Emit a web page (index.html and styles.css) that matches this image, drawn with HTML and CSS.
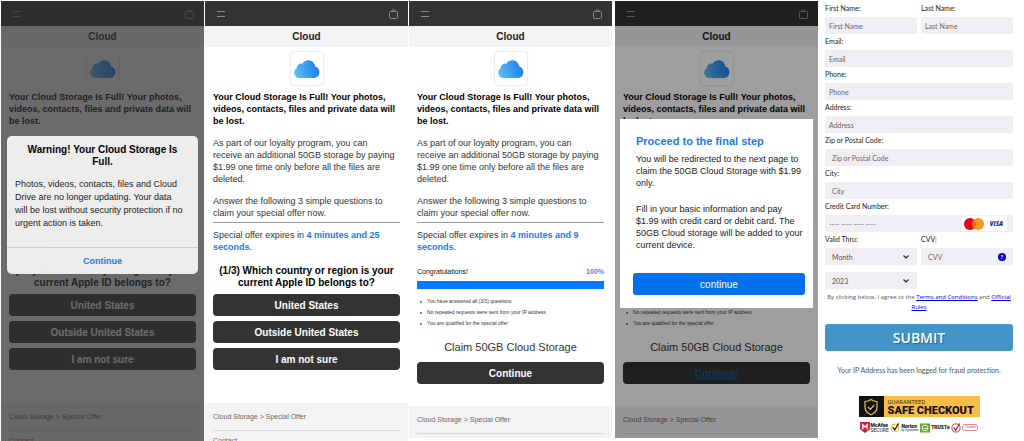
FILE: index.html
```
<!DOCTYPE html>
<html lang="en">
<head>
  <meta charset="utf-8">
  <title>Cloud</title>
  <link rel="stylesheet" href="styles.css">
</head>
<body>
  <!-- shared icons -->
  <svg class="defs" aria-hidden="true">
    <linearGradient id="sky" x1="0" y1="0.6" x2="1" y2="0.4">
      <stop offset="0" stop-color="#5cbcf6"/>
      <stop offset="1" stop-color="#1c7cec"/>
    </linearGradient>
    <symbol id="cloud" viewBox="0 0 26 18">
      <path fill="url(#sky)" d="M5.500 18A5.500 5.500 0 0 1 2.600 8 4.600 4.600 0 0 1 8.400 3.800C11-1.500 20-1.300 21.200 6.600A5.900 5.900 0 0 1 20.500 18z"/>
    </symbol>
    <symbol id="menu" viewBox="0 0 8 6">
      <path stroke="#8e8e8e" d="M0 .5h8M0 5.500h8"/>
    </symbol>
    <symbol id="bag" viewBox="0 0 9 10">
      <path fill="none" stroke="#8e8e8e" d="M1.500 2.500h6a1 1 0 0 1 1 1v5a1 1 0 0 1-1 1h-6a1 1 0 0 1-1-1v-5a1 1 0 0 1 1-1zM2.800 2.500c0-2.700 3.400-2.700 3.400 0"/>
    </symbol>
  </svg>

  <main class="screens">
    <section class="phone">
      <header class="bar"><svg class="menu"><use href="#menu"/></svg><svg class="bag"><use href="#bag"/></svg></header>
      <h1>Cloud</h1>
      <div class="content">
        <div class="logo"><svg><use href="#cloud"/></svg></div>
        <h2>Your Cloud Storage Is Full! Your photos, videos, contacts, files and private data will be lost.</h2>
        <p>As part of our loyalty program, you can<br>receive an additional 50GB storage by paying<br>$1.99 one time only before all the files are<br>deleted.</p>
        <p>Answer the following 3 simple questions to claim your special offer now.</p>
        <p class="offer">Special offer expires in <b>4 minutes and 34 seconds</b>.</p>
        <h3>(1/3) Which country or region is your current Apple ID belongs to?</h3>
        <button type="button" class="choice">United States</button>
        <button type="button" class="choice">Outside United States</button>
        <button type="button" class="choice">I am not sure</button>
      </div>
      <footer><p>Cloud Storage &gt; Special Offer</p><p>Contact</p></footer>
      <div class="overlay dark">
        <div class="alert" role="dialog" aria-labelledby="warn">
          <h2 id="warn">Warning! Your Cloud Storage Is Full.</h2>
          <p>Photos, videos, contacts, files and Cloud<br>Drive are no longer updating. Your data<br>will be lost without security protection if no<br>urgent action is taken.</p>
          <button type="button">Continue</button>
        </div>
      </div>
    </section>

    <section class="phone">
      <header class="bar"><svg class="menu"><use href="#menu"/></svg><svg class="bag"><use href="#bag"/></svg></header>
      <h1>Cloud</h1>
      <div class="content">
        <div class="logo"><svg><use href="#cloud"/></svg></div>
        <h2>Your Cloud Storage Is Full! Your photos, videos, contacts, files and private data will be lost.</h2>
        <p>As part of our loyalty program, you can<br>receive an additional 50GB storage by paying<br>$1.99 one time only before all the files are<br>deleted.</p>
        <p>Answer the following 3 simple questions to claim your special offer now.</p>
        <p class="offer">Special offer expires in <b>4 minutes and 25 seconds</b>.</p>
        <h3>(1/3) Which country or region is your current Apple ID belongs to?</h3>
        <button type="button" class="choice">United States</button>
        <button type="button" class="choice">Outside United States</button>
        <button type="button" class="choice">I am not sure</button>
      </div>
      <footer><p>Cloud Storage &gt; Special Offer</p><p>Contact</p></footer>
    </section>

    <section class="phone short">
      <header class="bar"><svg class="menu"><use href="#menu"/></svg><svg class="bag"><use href="#bag"/></svg></header>
      <h1>Cloud</h1>
      <div class="content">
        <div class="logo"><svg><use href="#cloud"/></svg></div>
        <h2>Your Cloud Storage Is Full! Your photos, videos, contacts, files and private data will be lost.</h2>
        <p>As part of our loyalty program, you can<br>receive an additional 50GB storage by paying<br>$1.99 one time only before all the files are<br>deleted.</p>
        <p>Answer the following 3 simple questions to claim your special offer now.</p>
        <p class="offer">Special offer expires in <b>4 minutes and 9 seconds</b>.</p>
        <div class="result"><span>Congratulations!</span><b>100%</b></div>
        <div class="progress"></div>
        <ul>
          <li>You have answered all (3/3) questions</li>
          <li>No repeated requests were sent from your IP address</li>
          <li>You are qualified for the special offer</li>
        </ul>
        <div class="claim">Claim 50GB Cloud Storage</div>
        <button type="button" class="choice">Continue</button>
      </div>
      <footer><p>Cloud Storage &gt; Special Offer</p><p></p></footer>
    </section>

    <section class="phone short">
      <header class="bar"><svg class="menu"><use href="#menu"/></svg><svg class="bag"><use href="#bag"/></svg></header>
      <h1>Cloud</h1>
      <div class="content">
        <div class="logo"><svg><use href="#cloud"/></svg></div>
        <h2>Your Cloud Storage Is Full! Your photos, videos, contacts, files and private data will be lost.</h2>
        <p>As part of our loyalty program, you can<br>receive an additional 50GB storage by paying<br>$1.99 one time only before all the files are<br>deleted.</p>
        <p>Answer the following 3 simple questions to claim your special offer now.</p>
        <p class="offer">Special offer expires in <b>4 minutes and 9 seconds</b>.</p>
        <div class="result"><span>Congratulations!</span><b>100%</b></div>
        <div class="progress"></div>
        <ul>
          <li>You have answered all (3/3) questions</li>
          <li>No repeated requests were sent from your IP address</li>
          <li>You are qualified for the special offer</li>
        </ul>
        <div class="claim">Claim 50GB Cloud Storage</div>
        <button type="button" class="choice visited">Continue</button>
      </div>
      <footer><p>Cloud Storage &gt; Special Offer</p><p></p></footer>
      <div class="overlay">
        <div class="final" role="dialog" aria-labelledby="final">
          <h2 id="final">Proceed to the final step</h2>
          <p>You will be redirected to the next page to<br>claim the 50GB Cloud Storage with $1.99<br>only.</p>
          <p>Fill in your basic information and pay<br>$1.99 with credit card or debit card. The<br>50GB Cloud storage will be added to your<br>current device.</p>
          <button type="button">continue</button>
        </div>
      </div>
    </section>

    <form class="checkout">
      <div class="pair">
        <div><label for="first">First Name:</label><input id="first" placeholder="First Name"></div>
        <div><label for="last">Last Name:</label><input id="last" placeholder="Last Name"></div>
      </div>
      <label for="email">Email:</label>
      <input type="email" id="email" placeholder="Email">
      <label for="phone">Phone:</label>
      <input type="tel" id="phone" placeholder="Phone">
      <label for="address">Address:</label>
      <input id="address" placeholder="Address">
      <label for="zip">Zip or Postal Code:</label>
      <input id="zip" class="wide" placeholder="Zip or Postal Code">
      <label for="city">City:</label>
      <input id="city" class="wide" placeholder="City">
      <label for="card">Credit Card Number:</label>
      <div class="field">
        <input id="card" placeholder="---- ---- ---- ----">
        <span class="brands">
          <svg class="mastercard" viewBox="0 0 20 12"><circle cx="6" cy="6" r="6" fill="#e5001f"/><circle cx="14" cy="6" r="6" fill="#f79a1c"/><path fill="#f4611b" d="M10 1.500a6 6 0 0 1 0 9 6 6 0 0 1 0-9z"/></svg>
          <i>VISA</i>
        </span>
      </div>
      <div class="pair">
        <div>
          <label for="month">Valid Thru:</label>
          <div class="field">
            <select id="month"><option>Month</option></select>
            <svg class="arrow" viewBox="0 0 6 4"><path d="M.5.5 3 3 5.500.5"/></svg>
          </div>
          <div class="field year">
            <select aria-label="Year"><option>2023</option></select>
            <svg class="arrow" viewBox="0 0 6 4"><path d="M.5.5 3 3 5.500.5"/></svg>
          </div>
        </div>
        <div>
          <label for="cvv">CVV:</label>
          <div class="field">
            <input id="cvv" class="wide" placeholder="CVV">
            <span class="help">?</span>
          </div>
        </div>
      </div>
      <p class="terms">By clicking below, I agree to the <a href="#">Terms and Conditions</a> and <a href="#">Official<br>Rules</a></p>
      <button type="button" class="submit">SUBMIT</button>
      <p class="ip">Your IP Address has been logged for fraud protection.</p>

      <div class="safe">
        <div class="shield">
          <svg viewBox="0 0 16 18"><path d="M8 1.500c2 1.500 4 2 6 2V9c0 4-3 6.500-6 7.700C5 15.500 2 13 2 9V3.500c2 0 4-.5 6-2zM5 9l2.300 2.300L11.200 7"/></svg>
        </div>
        <div class="words"><span>GUARANTEED</span><b>SAFE CHECKOUT</b></div>
      </div>
      <div class="seals">
        <div class="seal">
          <svg class="mcafee" viewBox="0 0 9 10"><path fill="#c8203a" d="M0 0h9v6.500L4.500 10 0 6.500z"/><path fill="none" stroke="#fff" stroke-width="1.200" d="M2.500 6.500v-4l2 2 2-2v4"/></svg>
          <div><b>McAfee</b><span>SECURE</span></div>
        </div>
        <div class="seal">
          <svg viewBox="0 0 11 11"><circle cx="5.500" cy="6" r="4.200" fill="none" stroke="#f8c51c" stroke-width="1.300"/><path fill="none" stroke="#222" stroke-width="1.500" d="M3 5l2.300 3L9.500 1"/></svg>
          <div><b>Norton</b><small>by Symantec</small></div>
        </div>
        <div class="seal">
          <svg viewBox="0 0 11 11"><path fill="#62ad35" d="M0 1h11v10H0z"/><circle cx="5.500" cy="6" r="3.200" fill="none" stroke="#fff"/><path stroke="#fff" d="M4 6.500h4"/></svg>
          <div><b>TRUSTe</b></div>
        </div>
        <div class="seal">
          <svg viewBox="0 0 11 11"><circle cx="5.500" cy="6" r="4.500" fill="none" stroke="#b9324a"/><path fill="none" stroke="#b9324a" stroke-width="1.500" d="M3 5.500l2.200 3L9.500 1"/></svg>
          <div class="pill">Trusted</div>
        </div>
      </div>
    </form>
  </main>
</body>
</html>
```
FILE: styles.css
```
* { box-sizing: border-box; }
body { margin: 0; background: #fff; font-family: "Liberation Sans", Arial, sans-serif; font-size: 9px; line-height: 12px; color: #333; }
h1, h2, h3, p, ul { margin: 0; padding: 0; }
button { display: block; width: 100%; border: 0; padding: 0; font-family: inherit; cursor: pointer; }
svg { display: block; }
.defs { position: absolute; width: 0; height: 0; }

.screens { display: grid; grid-template-columns: 203fr 203fr 205fr 203fr 205fr; gap: 1px; height: 100vh; padding: 1px 0 0 1px; overflow: hidden; }

/* phone screens */
.phone { position: relative; display: flex; flex-direction: column; min-width: 0; overflow: hidden; }
.phone.short { margin-bottom: 3px; }
.phone:nth-child(3) { margin-right: 2px; }
.bar { display: flex; align-items: center; justify-content: space-between; flex: none; height: 25px; padding: 0 10px 0 12px; background: #333; }
.menu { width: 8px; height: 6px; }
.bag { width: 9px; height: 10px; }
h1 { flex: none; height: 21px; background: #f3f3f5; font-size: 10px; line-height: 21px; text-align: center; color: #222; }
.content { flex: none; padding: 5px 8px 28px; }
.short .content { padding-bottom: 17px; }
.logo { display: flex; align-items: center; justify-content: center; width: 32px; height: 33px; margin: 0 auto 6px; border-radius: 3px; box-shadow: 0 0 2px #bbb; }
.logo svg { width: 26px; height: 18px; }
.content h2 { font-size: 9px; color: #000; }
.content p { margin-top: 10px; }
.content .offer { margin-top: 3px; padding-top: 6px; border-top: 1px solid #999; }
.offer b { color: #1a7af0; }
h3 { margin: 12px 0 5px; font-size: 10px; text-align: center; color: #000; }
.choice { height: 22px; margin-bottom: 5px; border-radius: 4px; background: #333; color: #fff; font-size: 10px; font-weight: bold; }
.choice.visited { color: #1c5794; text-decoration: underline; }
.result { display: flex; justify-content: space-between; margin: 13px 0 3px; font-size: 7px; color: #111; }
.result b { color: #3f8cf0; }
.progress { height: 8px; background: #007aff; }
ul { margin: 7px 0 10px; padding-left: 10px; font-size: 5px; line-height: 11px; list-style: none; }
li::before { content: ""; float: left; width: 2px; height: 2px; margin: 5px 0 0 -7px; border-radius: 1px; background: #2a6fc4; }
.claim { margin-bottom: 7px; font-size: 11px; line-height: 16px; text-align: center; }
footer { flex: 1; padding: 0 8px; background: #f3f3f5; font-size: 7px; color: #666; }
footer p { height: 28px; padding-top: 8px; border-bottom: 1px solid #d8d8da; }
footer p + p { padding-top: 4px; border: 0; }

/* popups */
.overlay { position: absolute; inset: 0; padding: 118px 5px 0; background: rgba(0, 0, 0, .38); }
.overlay.dark { padding: 135px 6px 0; background: rgba(44, 44, 46, .7); }
.alert { border-radius: 5px; background: rgba(242, 242, 242, .96); color: #222; }
.alert h2 { padding: 8px 12px 0; font-size: 10px; text-align: center; color: #000; }
.alert p { padding: 10px 8px 17px; line-height: 13px; border-bottom: 1px solid #ccc; }
.alert button { height: 26px; background: none; color: #1a7af0; font-size: 9px; font-weight: bold; }
.final { padding: 14px 8px 13px 13px; background: #fff; color: #222; }
.final h2 { margin: 0 3px 4px; font-size: 11px; line-height: 16px; color: #1a7af0; }
.final p { margin: 0 3px 14px; white-space: nowrap; }
.final button { height: 22px; margin-top: 22px; border-radius: 3px; background: #0070ec; color: #fff; font-size: 10px; }

/* checkout form */
.checkout { min-width: 0; padding: 0 11px 0 6px; font-family: Lato, "Open Sans", sans-serif; font-size: 7px; }
.pair { display: grid; grid-template-columns: 1fr 1fr; gap: 4px; }
label { display: block; height: 16px; line-height: 15px; color: #222; }
input, select { display: block; width: 100%; height: 17px; padding: 0 4px; border: 0; border-radius: 1px; background: #f0eef3; color: #555; font-family: inherit; font-size: 7px; }
input::placeholder { color: #666; opacity: 1; }
select, .wide { padding-left: 7px; }
select { appearance: none; }
.field { position: relative; }
.year { margin-top: 7px; }
.arrow { position: absolute; right: 8px; top: 7px; width: 6px; height: 4px; fill: none; stroke: #222; stroke-width: 1.2; pointer-events: none; }
.brands { position: absolute; right: 6px; top: 1px; display: flex; align-items: center; justify-content: space-between; width: 45px; height: 15px; padding: 0 4px 0 2px; background: #fff; }
.mastercard { width: 20px; height: 12px; }
.brands i { color: #1a2a9c; font-family: "Open Sans", sans-serif; font-size: 6px; font-weight: 800; }
.help { position: absolute; right: 7px; top: 5px; width: 8px; height: 8px; border-radius: 50%; background: #0000d8; color: #fff; font-size: 6px; font-weight: bold; line-height: 8px; text-align: center; }
.terms { margin-top: 3px; font-family: "Open Sans", sans-serif; font-size: 6px; line-height: 10px; text-align: center; white-space: nowrap; color: #555; }
a { color: #0000ee; }
.submit { height: 27px; margin-top: 12px; border-radius: 3px; background: #4394c7; color: #fff; font-family: "Open Sans", sans-serif; font-size: 14px; font-weight: 600; text-shadow: 1px 1px 1px #2d6288; }
.ip { margin-top: 13px; text-align: center; color: #555; }
.safe { display: flex; width: 121px; height: 21px; margin: 20px auto 4px; background: #f7bd45; color: #111; font-family: Roboto, sans-serif; }
.shield { display: flex; align-items: center; justify-content: center; width: 25px; background: #111; }
.shield svg { width: 16px; height: 18px; fill: none; stroke: #f3c14c; stroke-width: 1.2; }
.words { display: flex; flex-direction: column; justify-content: center; padding-left: 4px; }
.words span { color: #4a3a12; font-size: 6px; line-height: 7px; }
.words b { font-size: 11px; line-height: 11px; font-weight: 900; }
.seals { display: flex; justify-content: space-between; width: 119px; margin: 0 auto; color: #222; font-family: Roboto, sans-serif; font-size: 5px; line-height: 5px; }
.seal { display: flex; align-items: center; gap: 1px; height: 13px; }
.seal svg { width: 10px; height: 11px; }
.seal b, .seal span, .seal small { display: block; }
.seal b { font-weight: 900; }
.seal small { font-size: 3px; line-height: 3px; }
.pill { padding: 0 2px; border: 1px solid #d98a98; border-radius: 3px; color: #c33c52; font-size: 3px; }
```
